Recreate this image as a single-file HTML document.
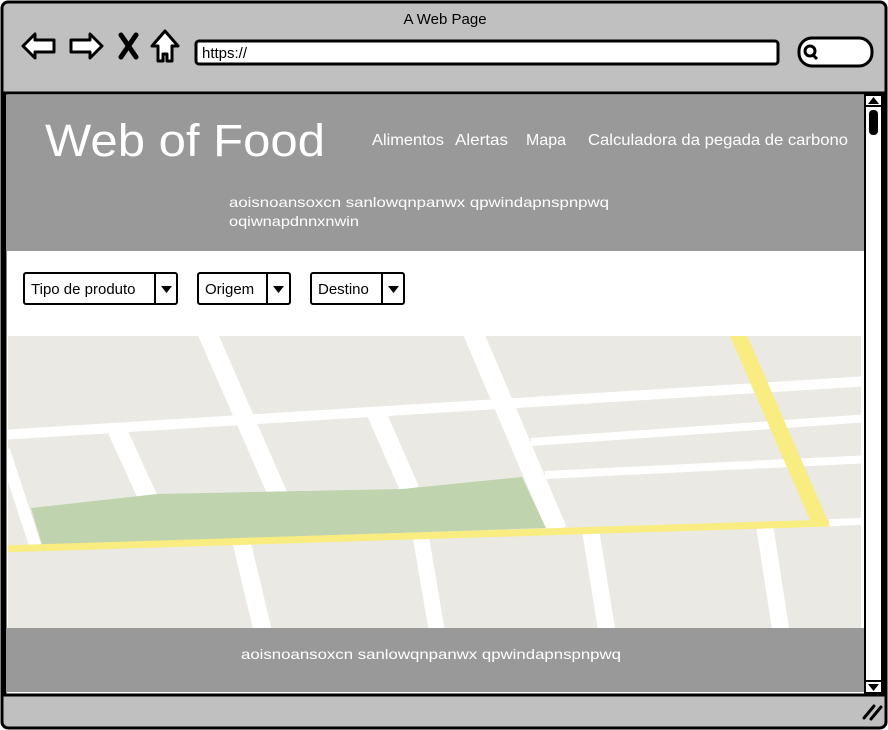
<!DOCTYPE html>
<html><head><meta charset="utf-8"><style>
html,body{margin:0;padding:0;background:#fff;}
svg{display:block}
text{font-family:"Liberation Sans",sans-serif}
</style></head><body>
<svg width="888" height="730" viewBox="0 0 888 730" xmlns="http://www.w3.org/2000/svg">
<!-- browser frame -->
<rect x="2" y="2" width="884" height="726" rx="6" fill="#c0c0c0" stroke="#000" stroke-width="3"/>
<text x="445" y="24" font-size="15" text-anchor="middle" fill="#000">A Web Page</text>
<!-- nav icons -->
<path d="M23 46 L35 34 L35 40 L54 40 L54 52 L35 52 L35 58 Z" fill="#fff" stroke="#000" stroke-width="3" stroke-linejoin="round"/>
<path d="M102 46 L90 34 L90 40 L71 40 L71 52 L90 52 L90 58 Z" fill="#fff" stroke="#000" stroke-width="3" stroke-linejoin="round"/>
<path d="M121 35 L136 57 M136 35 L121 57" stroke="#000" stroke-width="5" stroke-linecap="round"/>
<path d="M165 31 L178 46 L172 46 L172 61 L167 61 L167 54 L163 54 L163 61 L158 61 L158 46 L152 46 Z" fill="#fff" stroke="#000" stroke-width="3" stroke-linejoin="round"/>
<rect x="196" y="41" width="582" height="23" rx="3" fill="#fff" stroke="#000" stroke-width="3"/>
<text x="202" y="58" font-size="15" fill="#000">https://</text>
<rect x="799" y="38" width="73" height="28" rx="13" fill="#fff" stroke="#000" stroke-width="3"/>
<circle cx="810" cy="51" r="5" fill="none" stroke="#000" stroke-width="3"/>
<path d="M813 55 L817 59" stroke="#000" stroke-width="3"/>
<!-- content -->
<rect x="5" y="93" width="878" height="602" fill="#fff" stroke="#000" stroke-width="3"/>
<rect x="6" y="95" width="858" height="156" fill="#999"/>
<text x="45" y="156" font-size="45" fill="#fff" textLength="280" lengthAdjust="spacingAndGlyphs">Web of Food</text>
<text x="372" y="145" font-size="16" fill="#fff" textLength="72" lengthAdjust="spacingAndGlyphs">Alimentos</text>
<text x="455" y="145" font-size="16" fill="#fff" textLength="53" lengthAdjust="spacingAndGlyphs">Alertas</text>
<text x="526" y="145" font-size="16" fill="#fff" textLength="40" lengthAdjust="spacingAndGlyphs">Mapa</text>
<text x="588" y="145" font-size="16" fill="#fff" textLength="260" lengthAdjust="spacingAndGlyphs">Calculadora da pegada de carbono</text>
<text x="229" y="207" font-size="14" fill="#fff" textLength="380" lengthAdjust="spacingAndGlyphs">aoisnoansoxcn sanlowqnpanwx  qpwindapnspnpwq</text>
<text x="229" y="226" font-size="14" fill="#fff" textLength="130" lengthAdjust="spacingAndGlyphs">oqiwnapdnnxnwin</text>
<!-- dropdowns -->
<g stroke="#000" stroke-width="2" fill="#fff">
<rect x="24" y="273" width="153" height="31" rx="2"/><line x1="155" y1="273" x2="155" y2="304"/>
<rect x="198" y="273" width="92" height="31" rx="2"/><line x1="267" y1="273" x2="267" y2="304"/>
<rect x="311" y="273" width="93" height="31" rx="2"/><line x1="382" y1="273" x2="382" y2="304"/>
</g>
<g fill="#000">
<path d="M161 286 L172 286 L166.5 293 Z"/>
<path d="M273 286 L284 286 L278.5 293 Z"/>
<path d="M388 286 L399 286 L393.5 293 Z"/>
</g>
<text x="31" y="294" font-size="15" fill="#000">Tipo de produto</text>
<text x="205" y="294" font-size="15" fill="#000">Origem</text>
<text x="318" y="294" font-size="15" fill="#000">Destino</text>
<!-- map -->
<svg x="8" y="336" width="853" height="292" viewBox="8 336 853 292">
<rect x="8" y="336" width="853" height="292" fill="#ebe9e3"/>
<g stroke="#fff" fill="none" stroke-linecap="butt">
<line x1="0" y1="435" x2="870" y2="381" stroke-width="10"/>
<line x1="531" y1="442" x2="870" y2="418" stroke-width="8"/>
<line x1="545" y1="475" x2="870" y2="459" stroke-width="8"/>
<line x1="800" y1="524" x2="870" y2="521" stroke-width="7"/>
<line x1="4" y1="450" x2="36" y2="548" stroke-width="12"/>
<line x1="117" y1="430" x2="148" y2="498" stroke-width="19"/>
<line x1="206" y1="330" x2="278" y2="495" stroke-width="19"/>
<line x1="375" y1="410" x2="410" y2="490" stroke-width="19"/>
<line x1="472" y1="330" x2="557" y2="530" stroke-width="20"/>
<line x1="241" y1="540" x2="263" y2="632" stroke-width="18"/>
<line x1="421" y1="538" x2="437" y2="632" stroke-width="16"/>
<line x1="591" y1="533" x2="607" y2="632" stroke-width="17"/>
<line x1="765" y1="528" x2="781" y2="632" stroke-width="17"/>
</g>
<polygon points="31,508 157,494 402,489 522,477 546,528 42,545" fill="#bfd4ae"/>
<g stroke="#f9ec80" fill="none">
<line x1="0" y1="549" x2="829" y2="523" stroke-width="7"/>
<polyline points="736,330 820,523" stroke-width="16"/>
</g>
</svg>
<!-- footer -->
<rect x="6" y="628" width="858" height="64" fill="#999"/>
<text x="241" y="659" font-size="14" fill="#fff" textLength="380" lengthAdjust="spacingAndGlyphs">aoisnoansoxcn sanlowqnpanwx  qpwindapnspnpwq</text>
<!-- scrollbar -->
<rect x="865" y="95" width="17" height="598" fill="#fff" stroke="#000" stroke-width="2"/>
<line x1="865" y1="106" x2="882" y2="106" stroke="#000" stroke-width="2"/>
<line x1="865" y1="681" x2="882" y2="681" stroke="#000" stroke-width="2"/>
<path d="M868 104 L879 104 L873.5 97 Z" fill="#000"/>
<path d="M868 684 L879 684 L873.5 691 Z" fill="#000"/>
<rect x="869" y="110" width="9" height="25" rx="4" fill="#000"/>
<!-- resize -->
<path d="M864 718 L874 706 M871 719 L881 707" stroke="#000" stroke-width="3" stroke-linecap="round"/>
</svg>
</body></html>
